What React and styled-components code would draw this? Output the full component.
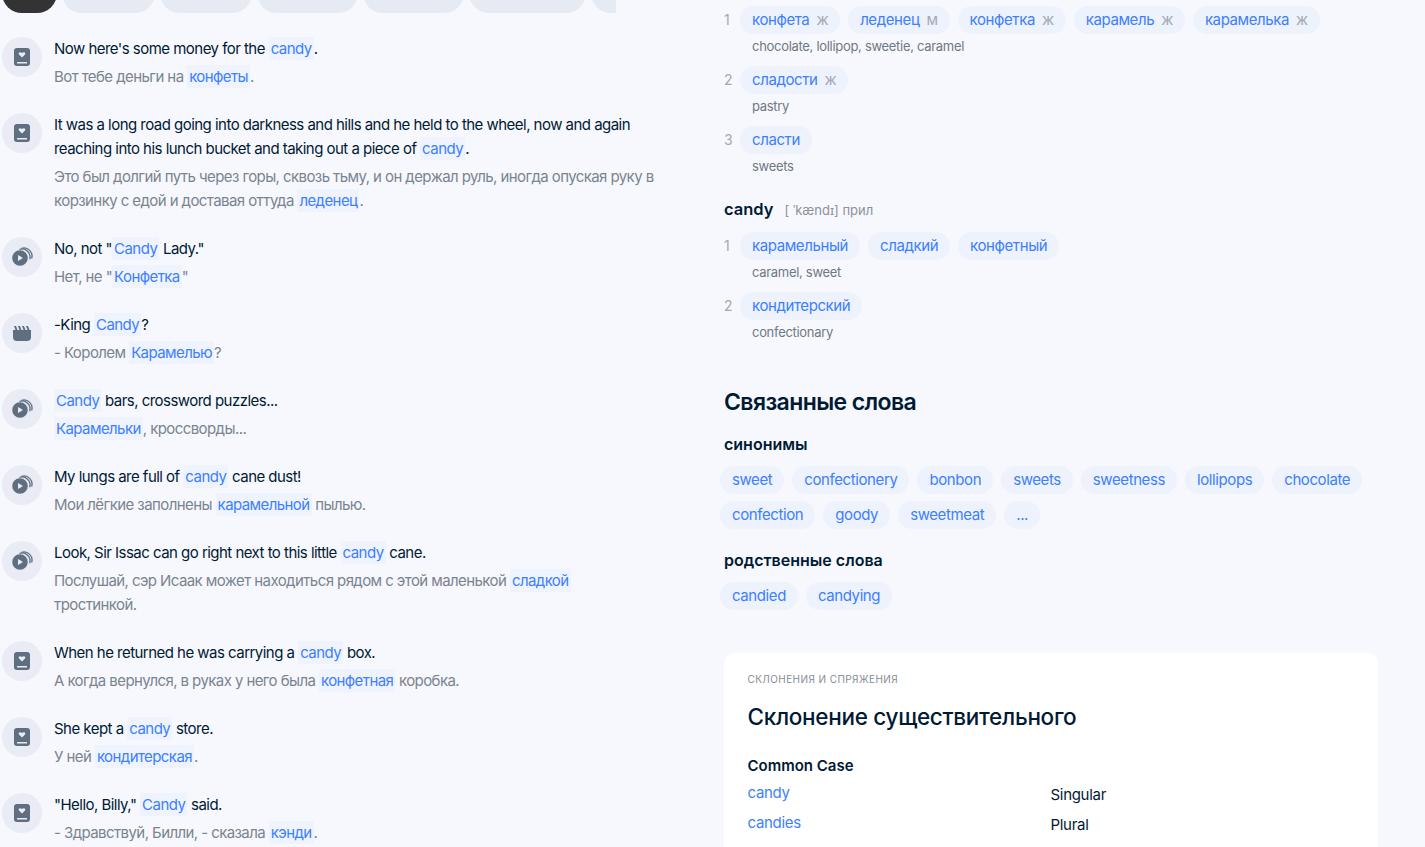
import React from 'react'
import styled, { createGlobalStyle } from 'styled-components'

const GlobalStyle = createGlobalStyle`
  html, body {
    margin: 0;
    background: #f7f8fd;
    height: 100%;
    overflow: hidden;
  }
  body {
    font-family: "Inter", "Noto Sans", sans-serif;
    color: #001a34;
  }
`

const Page = styled.div`
  display: flex;
  width: 1425px;
  height: 847px;
  overflow: hidden;
`

const LeftColumn = styled.div`
  width: 724px;
  flex: none;
`

const TabStrip = styled.div`
  display: flex;
  align-items: flex-end;
  gap: 5px;
  height: 13px;
  padding-left: 2px;
  width: 614px;
  overflow: hidden;
`

const Tab = styled.div`
  flex: none;
  height: 40px;
  border-radius: 20px;
  background: ${props => props.active ? '#333' : '#e6eaf3'};
  width: ${props => props.w}px;
`

const Examples = styled.div`
  display: flex;
  flex-direction: column;
  gap: 24px;
  padding: 24px 0 0 2px;
`

const Example = styled.div`
  display: flex;
  gap: 12px;
`

const Badge = styled.div`
  flex: none;
  width: 40px;
  height: 40px;
  border-radius: 50%;
  background: #e9ecf4;
  display: flex;
  align-items: center;
  justify-content: center;
`

const Lines = styled.div`
  width: 601px;
`

const Source = styled.div`
  font-size: 15px;
  line-height: 24px;
  letter-spacing: -0.53px;
  color: #001a34;
  margin-bottom: 4px;
`

const Target = styled.div`
  font-size: 15px;
  line-height: 24px;
  letter-spacing: -0.58px;
  color: #7a8491;
`

const Hit = styled.span`
  color: #3d7fff;
  background: #eef3fd;
  padding: 2px;
`

const RightColumn = styled.div`
  width: 654px;
  flex: none;
  padding-top: 6px;
`

const Sense = styled.div`
  display: flex;
  margin-bottom: 9px;
`

const SenseNum = styled.div`
  width: 16px;
  font-size: 14px;
  line-height: 28px;
  color: #a3a9b3;
`

const SenseBody = styled.div`
  display: flex;
  flex-direction: column;
`

const ChipRow = styled.div`
  display: flex;
  flex-wrap: wrap;
  gap: 8px;
`

const Chip = styled.div`
  height: 28px;
  border-radius: 14px;
  background: #edf2fc;
  color: #3d7fff;
  font-size: 15px;
  line-height: 28px;
  letter-spacing: -0.4px;
  padding: 0 12px;
  white-space: nowrap;
`

const Gender = styled.span`
  color: #a3a9b3;
  margin-left: 7px;
`

const Gloss = styled.div`
  font-size: 13px;
  line-height: 22px;
  letter-spacing: -0.3px;
  color: #6f7884;
  padding: 1px 0 0 12px;
`

const Word = styled.div`
  display: flex;
  align-items: baseline;
  gap: 11px;
  font-size: 16.500px;
  font-weight: 600;
  line-height: 20px;
  margin: 22px 0 12px;
`

const Transcription = styled.span`
  font-size: 13px;
  font-weight: 400;
  color: #8b929c;
`

const SectionTitle = styled.h2`
  font-size: 23px;
  font-weight: 600;
  letter-spacing: -0.6px;
  line-height: 30px;
  margin: 44px 0 17px;
`

const RelHeading = styled.div`
  font-size: 16px;
  font-weight: 600;
  line-height: 20px;
  margin-bottom: 12px;
`

const RelChips = styled(ChipRow)`
  row-gap: 7px;
  margin: 0 0 21px -4px;
  width: 660px;
`

const Card = styled.div`
  margin-top: 43px;
  width: 654px;
  min-height: 300px;
  background: #fff;
  border-radius: 10px;
  padding: 18px 23.500px;
  box-sizing: border-box;
`

const Overline = styled.div`
  font-size: 10px;
  letter-spacing: 0.42px;
  line-height: 16px;
  color: #858c97;
  text-transform: uppercase;
`

const CardTitle = styled.div`
  font-size: 22.500px;
  font-weight: 500;
  line-height: 30px;
  letter-spacing: -0.3px;
  margin: 15px 0 23px;
`

const CaseName = styled.div`
  font-size: 15px;
  font-weight: 600;
  line-height: 22px;
  margin-bottom: 5px;
`

const CaseGrid = styled.div`
  display: grid;
  grid-template-columns: 303px 1fr;
  row-gap: 6px;
  font-size: 15px;
  line-height: 22px;
  letter-spacing: -0.3px;
`

const CaseForm = styled.div`
  color: #3d7fff;
`

const CaseLabel = styled.div`
  padding-top: 2px;
`

function BookIcon() {
  return (
    <svg width="16" height="18" viewBox="0 0 16 18">
      <path fill="#5f6e80" fillRule="evenodd" d="M3 0h10a3 3 0 0 1 3 3v12a3 3 0 0 1-3 3H3a3 3 0 0 1-3-3V3a3 3 0 0 1 3-3zM3 14v1.400h10V14zM8 9.400l3-2.800c1.200-1.400-.8-3.400-3-1.500-2.200-1.900-4.200.1-3 1.500z" />
    </svg>
  )
}

function DiscIcon() {
  return (
    <svg width="22" height="22" viewBox="0 0 22 22">
      <path fill="none" stroke="#5f6e80" strokeWidth="1.300" d="M10.500 2.400A8 8 0 0 1 20.600 12.500" />
      <path fill="none" stroke="#5f6e80" strokeWidth="1.300" d="M8.500 3.400A8 8 0 0 1 18.700 13.200" />
      <path fill="#5f6e80" fillRule="evenodd" d="M9 4.200a7.800 7.800 0 1 1 0 15.600 7.800 7.800 0 0 1 0-15.600zM7 9v6l5-3z" />
    </svg>
  )
}

function ClapIcon() {
  return (
    <svg width="18" height="15" viewBox="0 0 18 15">
      <path fill="#5f6e80" d="M0 4h18v7a4 4 0 0 1-4 4H4a4 4 0 0 1-4-4z" />
      <path fill="#5f6e80" d="M1 0h2l1.500 4h-2zM5 0h2l1.500 4h-2zM9 0h2l1.500 4h-2zM13 0h2l1.500 4h-2z" />
    </svg>
  )
}

const icons = { book: BookIcon, disc: DiscIcon, clap: ClapIcon }

// [icon, english parts, russian parts]; the middle part of each is the highlighted word
const examples = [
  ['book', ["Now here's some money for the ", 'candy', '.'], ['Вот тебе деньги на ', 'конфеты', '.']],
  ['book', ['It was a long road going into darkness and hills and he held to the wheel, now and again reaching into his lunch bucket and taking out a piece of ', 'candy', '.'], ['Это был долгий путь через горы, сквозь тьму, и он держал руль, иногда опуская руку в корзинку с едой и доставая оттуда ', 'леденец', '.']],
  ['disc', ['No, not "', 'Candy', ' Lady."'], ['Нет, не "', 'Конфетка', '"']],
  ['clap', ['-King ', 'Candy', '?'], ['- Королем ', 'Карамелью', '?']],
  ['disc', ['', 'Candy', ' bars, crossword puzzles...'], ['', 'Карамельки', ', кроссворды...']],
  ['disc', ['My lungs are full of ', 'candy', ' cane dust!'], ['Мои лёгкие заполнены ', 'карамельной', ' пылью.']],
  ['disc', ['Look, Sir Issac can go right next to this little ', 'candy', ' cane.'], ['Послушай, сэр Исаак может находиться рядом с этой маленькой ', 'сладкой', ' тростинкой.']],
  ['book', ['When he returned he was carrying a ', 'candy', ' box.'], ['А когда вернулся, в руках у него была ', 'конфетная', ' коробка.']],
  ['book', ['She kept a ', 'candy', ' store.'], ['У ней ', 'кондитерская', '.']],
  ['book', ['"Hello, Billy," ', 'Candy', ' said.'], ['- Здравствуй, Билли, - сказала ', 'кэнди', '.']],
]

const tabWidths = [55, 93, 92, 101, 101, 117, 60]

const nounSenses = [
  { words: [['конфета', 'ж'], ['леденец', 'м'], ['конфетка', 'ж'], ['карамель', 'ж'], ['карамелька', 'ж']], gloss: 'chocolate, lollipop, sweetie, caramel' },
  { words: [['сладости', 'ж']], gloss: 'pastry' },
  { words: [['сласти']], gloss: 'sweets' },
]

const adjSenses = [
  { words: [['карамельный'], ['сладкий'], ['конфетный']], gloss: 'caramel, sweet' },
  { words: [['кондитерский']], gloss: 'confectionary' },
]

const synonyms = ['sweet', 'confectionery', 'bonbon', 'sweets', 'sweetness', 'lollipops', 'chocolate', 'confection', 'goody', 'sweetmeat', '...']

function Parts({ parts }) {
  return <>{parts[0]}<Hit>{parts[1]}</Hit>{parts[2]}</>
}

function Senses({ items }) {
  return items.map((s, i) => (
    <Sense key={s.gloss}>
      <SenseNum>{i + 1}</SenseNum>
      <SenseBody>
        <ChipRow>
          {s.words.map(([w, g]) => <Chip key={w}>{w}{g && <Gender>{g}</Gender>}</Chip>)}
        </ChipRow>
        <Gloss>{s.gloss}</Gloss>
      </SenseBody>
    </Sense>
  ))
}

export default function App() {
  return (
    <Page>
      <GlobalStyle />
      <LeftColumn>
        <TabStrip>
          {tabWidths.map((w, i) => <Tab key={i} w={w} active={i === 0} />)}
        </TabStrip>
        <Examples>
          {examples.map(([icon, en, ru], i) => {
            const Icon = icons[icon]
            return (
              <Example key={i}>
                <Badge><Icon /></Badge>
                <Lines>
                  <Source><Parts parts={en} /></Source>
                  <Target><Parts parts={ru} /></Target>
                </Lines>
              </Example>
            )
          })}
        </Examples>
      </LeftColumn>
      <RightColumn>
        <Senses items={nounSenses} />
        <Word>candy <Transcription>[ ˈkændɪ] прил</Transcription></Word>
        <Senses items={adjSenses} />
        <SectionTitle>Связанные слова</SectionTitle>
        <RelHeading>синонимы</RelHeading>
        <RelChips>{synonyms.map(s => <Chip key={s}>{s}</Chip>)}</RelChips>
        <RelHeading>родственные слова</RelHeading>
        <RelChips><Chip>candied</Chip><Chip>candying</Chip></RelChips>
        <Card>
          <Overline>склонения и спряжения</Overline>
          <CardTitle>Склонение существительного</CardTitle>
          <CaseName>Common Case</CaseName>
          <CaseGrid>
            <CaseForm>candy</CaseForm><CaseLabel>Singular</CaseLabel>
            <CaseForm>candies</CaseForm><CaseLabel>Plural</CaseLabel>
          </CaseGrid>
        </Card>
      </RightColumn>
    </Page>
  )
}
